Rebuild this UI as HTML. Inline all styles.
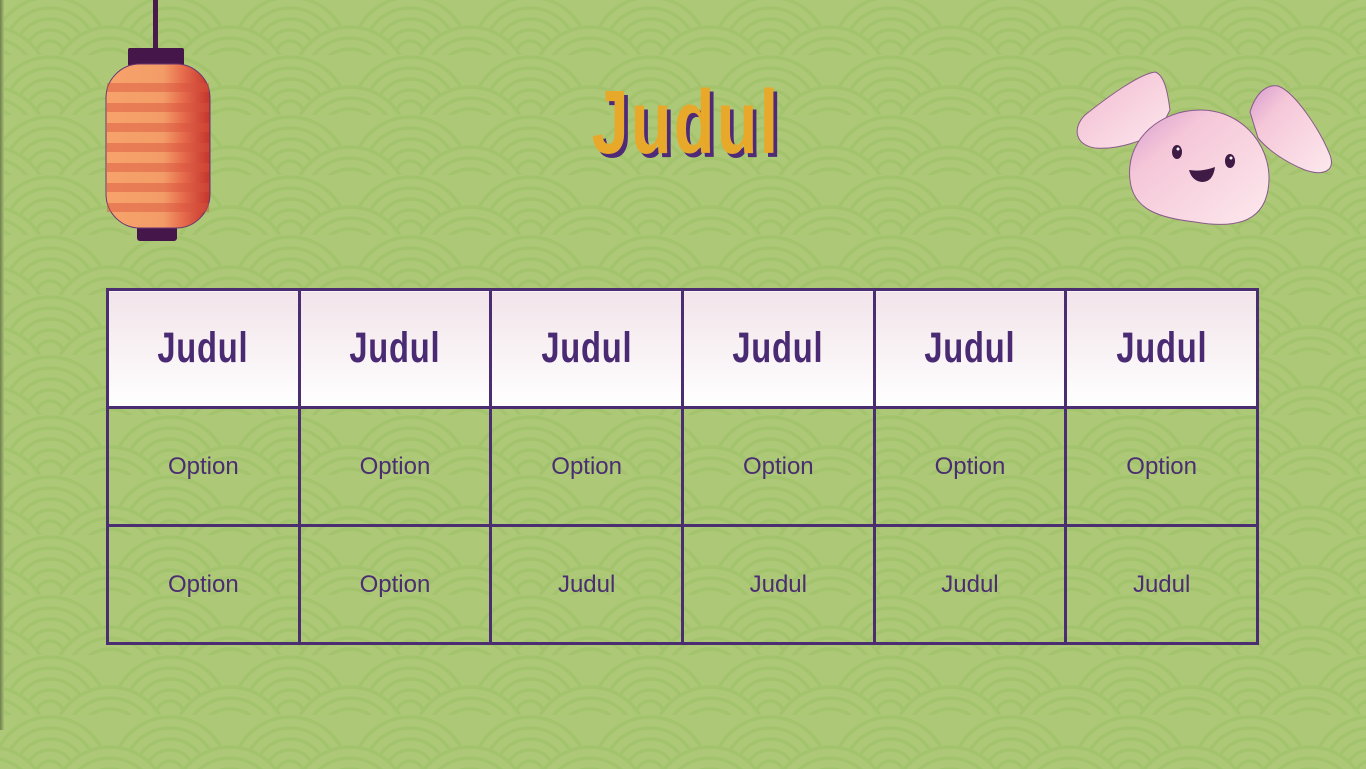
<!DOCTYPE html>
<html><head><meta charset="utf-8"><style>
html,body{margin:0;padding:0}
body{width:1366px;height:769px;overflow:hidden;position:relative;background:#adc978;font-family:"Liberation Sans",sans-serif}
.bg{position:absolute;inset:0}
.edge{position:absolute;left:0;top:0;width:4px;height:730px;background:linear-gradient(90deg,#6f7f4c,#a8c173)}
.title{position:absolute;left:536px;top:72px;width:300px;text-align:center;font-family:"Liberation Sans",sans-serif;font-weight:bold;font-size:90px;color:#e8a82a;text-shadow:5px 4px 0 #4e2a78;transform:scaleX(0.74);transform-origin:center;letter-spacing:3px}
table{position:absolute;left:106px;top:288px;border-collapse:collapse;table-layout:fixed;width:1153px}
tr{height:118px}
td{border:3px solid #4b2d72;text-align:center;color:#4b2d72;font-size:24px;padding:0;height:112px}
tr.h td{background:linear-gradient(#f2e4ea,#fff)}
.hd{display:inline-block;font-family:"Liberation Sans",sans-serif;font-weight:bold;font-size:43px;color:#4a2a72;transform:scaleX(0.76);letter-spacing:1px}
</style></head><body>
<svg class="bg" width="1366" height="769">
<defs><pattern id="p" width="120" height="60" patternUnits="userSpaceOnUse" x="-10" y="-5">
<g fill="#adc978" stroke="#a3c46d" stroke-width="3.5">
<circle cx="60" cy="60" r="58"/>
</g>
<g fill="none" stroke="#a3c46d" stroke-width="3.5">
<circle cx="60" cy="60" r="47"/><circle cx="60" cy="60" r="36"/><circle cx="60" cy="60" r="25"/><circle cx="60" cy="60" r="14"/>
</g>
<g fill="#adc978" stroke="#a3c46d" stroke-width="3.5">
<circle cx="0" cy="90" r="58"/><circle cx="120" cy="90" r="58"/>
</g>
<g fill="none" stroke="#a3c46d" stroke-width="3.5">
<circle cx="0" cy="90" r="47"/><circle cx="120" cy="90" r="47"/>
<circle cx="0" cy="90" r="36"/><circle cx="120" cy="90" r="36"/>
</g>
</pattern>
<linearGradient id="lg" x1="0" x2="1"><stop offset="0" stop-color="#f7a36a"/><stop offset=".55" stop-color="#f39c68"/><stop offset=".72" stop-color="#e8704f"/><stop offset="1" stop-color="#c5352c"/></linearGradient>
<linearGradient id="bg2" x1="0" y1="0" x2="1" y2="1"><stop offset="0" stop-color="#d79ad0"/><stop offset=".3" stop-color="#f5c7d8"/><stop offset="1" stop-color="#fde9ee"/></linearGradient>
</defs>
<rect width="1366" height="769" fill="url(#p)"/>
<rect x="153" y="0" width="5" height="65" fill="#4a1a4a"/>
<rect x="128" y="48" width="56" height="18" rx="2" fill="#45164a"/>
<rect x="137" y="226" width="40" height="15" rx="3" fill="#45164a"/>
<rect x="106" y="64" width="104" height="164" rx="34" fill="url(#lg)" stroke="#6a3470" stroke-width="1"/>
<g fill="#d8523e" opacity=".45">
<rect x="107" y="83" width="102" height="9"/><rect x="107" y="103" width="102" height="9"/><rect x="107" y="123" width="102" height="9"/><rect x="107" y="143" width="102" height="9"/><rect x="107" y="163" width="102" height="9"/><rect x="107" y="183" width="102" height="9"/><rect x="107" y="203" width="102" height="9"/>
</g>
<g stroke="#8a5a8a" stroke-width="1">
<path d="M1170 110 C1168 95 1165 75 1155 72 C1140 74 1110 95 1085 115 C1072 128 1075 145 1095 148 C1120 150 1145 140 1160 130 Z" fill="url(#bg2)"/>
<path d="M1250 112 C1255 95 1265 84 1278 86 C1295 92 1320 130 1330 155 C1336 172 1322 176 1305 170 C1285 162 1268 150 1258 138 Z" fill="url(#bg2)"/>
<path d="M1130 180 C1125 140 1160 110 1200 110 C1245 110 1275 150 1268 190 C1262 225 1230 228 1195 222 C1160 218 1133 210 1130 180 Z" fill="url(#bg2)"/>
</g>
<ellipse cx="1177" cy="152" rx="5" ry="7" fill="#3e1a44"/><ellipse cx="1230" cy="161" rx="5" ry="7" fill="#3e1a44"/>
<circle cx="1178" cy="149" r="1.5" fill="#fff"/><circle cx="1231" cy="158" r="1.5" fill="#fff"/>
<path d="M1189 170 Q1202 172 1215 167 Q1213 182 1202 182 Q1192 181 1189 170 Z" fill="#3e1a44"/>
</svg>
<div class="edge"></div>
<div class="title">Judul</div>
<table>
<tr class="h"><td><span class="hd">Judul</span></td><td><span class="hd">Judul</span></td><td><span class="hd">Judul</span></td><td><span class="hd">Judul</span></td><td><span class="hd">Judul</span></td><td><span class="hd">Judul</span></td></tr>
<tr><td>Option</td><td>Option</td><td>Option</td><td>Option</td><td>Option</td><td>Option</td></tr>
<tr><td>Option</td><td>Option</td><td>Judul</td><td>Judul</td><td>Judul</td><td>Judul</td></tr>
</table>
</body></html>
